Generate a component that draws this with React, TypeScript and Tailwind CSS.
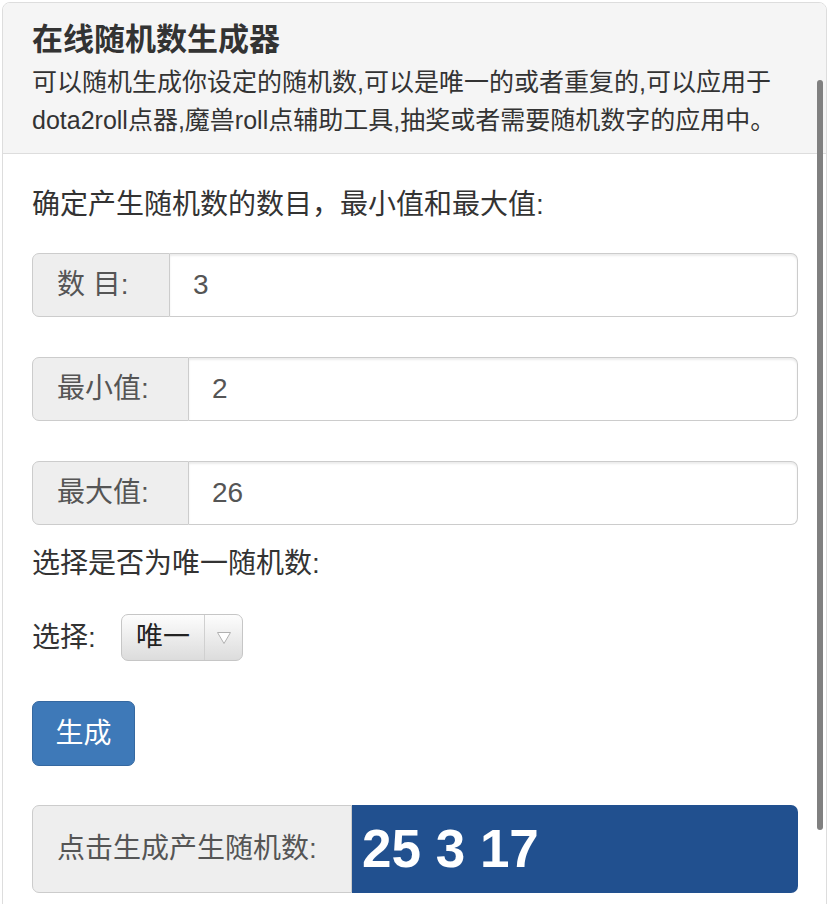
import { useState } from "react";

const font = "font-['Liberation_Sans','Noto_Sans_CJK_SC',sans-serif]";

function InputGroup({ label, value, addonWidth }: { label: string; value: string; addonWidth: string }) {
  return (
    <div className="flex h-[64px] w-[766px]">
      <div
        className={`${addonWidth} flex shrink-0 items-center rounded-l-[7px] border border-[#ccc] bg-[#eee] pl-[24px] text-[28px] text-[#555]`}
      >
        {label}
      </div>
      <div className="flex flex-1 items-center rounded-r-[7px] border border-l-0 border-[#ccc] bg-white pl-[23px] text-[28px] text-[#555] shadow-[inset_0_2px_2px_rgba(0,0,0,0.08)]">
        {value}
      </div>
    </div>
  );
}

export default function App() {
  const [nums] = useState([25, 3, 17]);

  return (
    <div className={`relative h-[904px] w-[828px] overflow-hidden bg-white ${font} text-[#333]`}>
      {/* Panel */}
      <div className="ml-[2px] mt-[2px] w-[825px] rounded-t-[8px] border border-[#ddd]">
        {/* Header */}
        <div className="rounded-t-[7px] border-b border-[#ddd] bg-[#f5f5f5] px-[29px] pb-[14px] pt-[19px]">
          <h3 className="text-[31px] font-bold leading-[36px] text-[#333]">在线随机数生成器</h3>
          <p className="mt-[5px] text-[25px] leading-[38px] text-[#333]">
            可以随机生成你设定的随机数,可以是唯一的或者重复的,可以应用于dota2roll点器,魔兽roll点辅助工具,抽奖或者需要随机数字的应用中。
          </p>
        </div>

        {/* Body */}
        <div className="px-[29px] pb-[20px] pt-[31px]">
          <p className="text-[28px] leading-[40px]">确定产生随机数的数目，最小值和最大值:</p>

          <div className="mt-[28px] flex flex-col gap-[40px]">
            <InputGroup label="数 目:" value="3" addonWidth="w-[138px]" />
            <InputGroup label="最小值:" value="2" addonWidth="w-[157px]" />
            <InputGroup label="最大值:" value="26" addonWidth="w-[157px]" />
          </div>

          <p className="mt-[19px] text-[28px] leading-[40px]">选择是否为唯一随机数:</p>

          <div className="mt-[30px] flex h-[47px] items-center">
            <span className="w-[89px] text-[28px]">选择:</span>
            <div className="flex h-[47px] w-[122px] items-stretch overflow-hidden rounded-[7px] border border-[#c6c6c6] bg-gradient-to-b from-[#fdfdfd] to-[#dcdcdc]">
              <span className="flex flex-1 items-center pl-[14px] text-[27px] text-[#222]">唯一</span>
              <span className="flex w-[38px] items-center justify-center border-l border-[#d0d0d0]">
                <svg width="16" height="14" viewBox="0 0 16 14">
                  <path d="M1.5 1.5 L14.5 1.5 L8 12.5 Z" fill="#fff" stroke="#b0b0b0" strokeWidth="1" />
                </svg>
              </span>
            </div>
          </div>

          <button className="mt-[40px] flex h-[65px] w-[103px] items-center justify-center rounded-[7px] border border-[#3568a0] bg-[#3e79b8] text-[28px] text-white">
            生成
          </button>

          <div className="mt-[39px] flex h-[88px] w-[766px]">
            <div className="flex w-[320px] shrink-0 items-center rounded-l-[7px] border border-[#ccc] bg-[#eee] pl-[24px] text-[28px] text-[#555]">
              点击生成产生随机数:
            </div>
            <div className="flex flex-1 items-center rounded-r-[7px] bg-[#21508f] pl-[10px] text-[53px] font-bold text-white">
              {nums.join(" ")}
            </div>
          </div>
        </div>
      </div>

      {/* iOS overlay scrollbar */}
      <div className="absolute left-[817px] top-[80px] h-[750px] w-[6px] rounded-full bg-[#808080]" />
    </div>
  );
}
